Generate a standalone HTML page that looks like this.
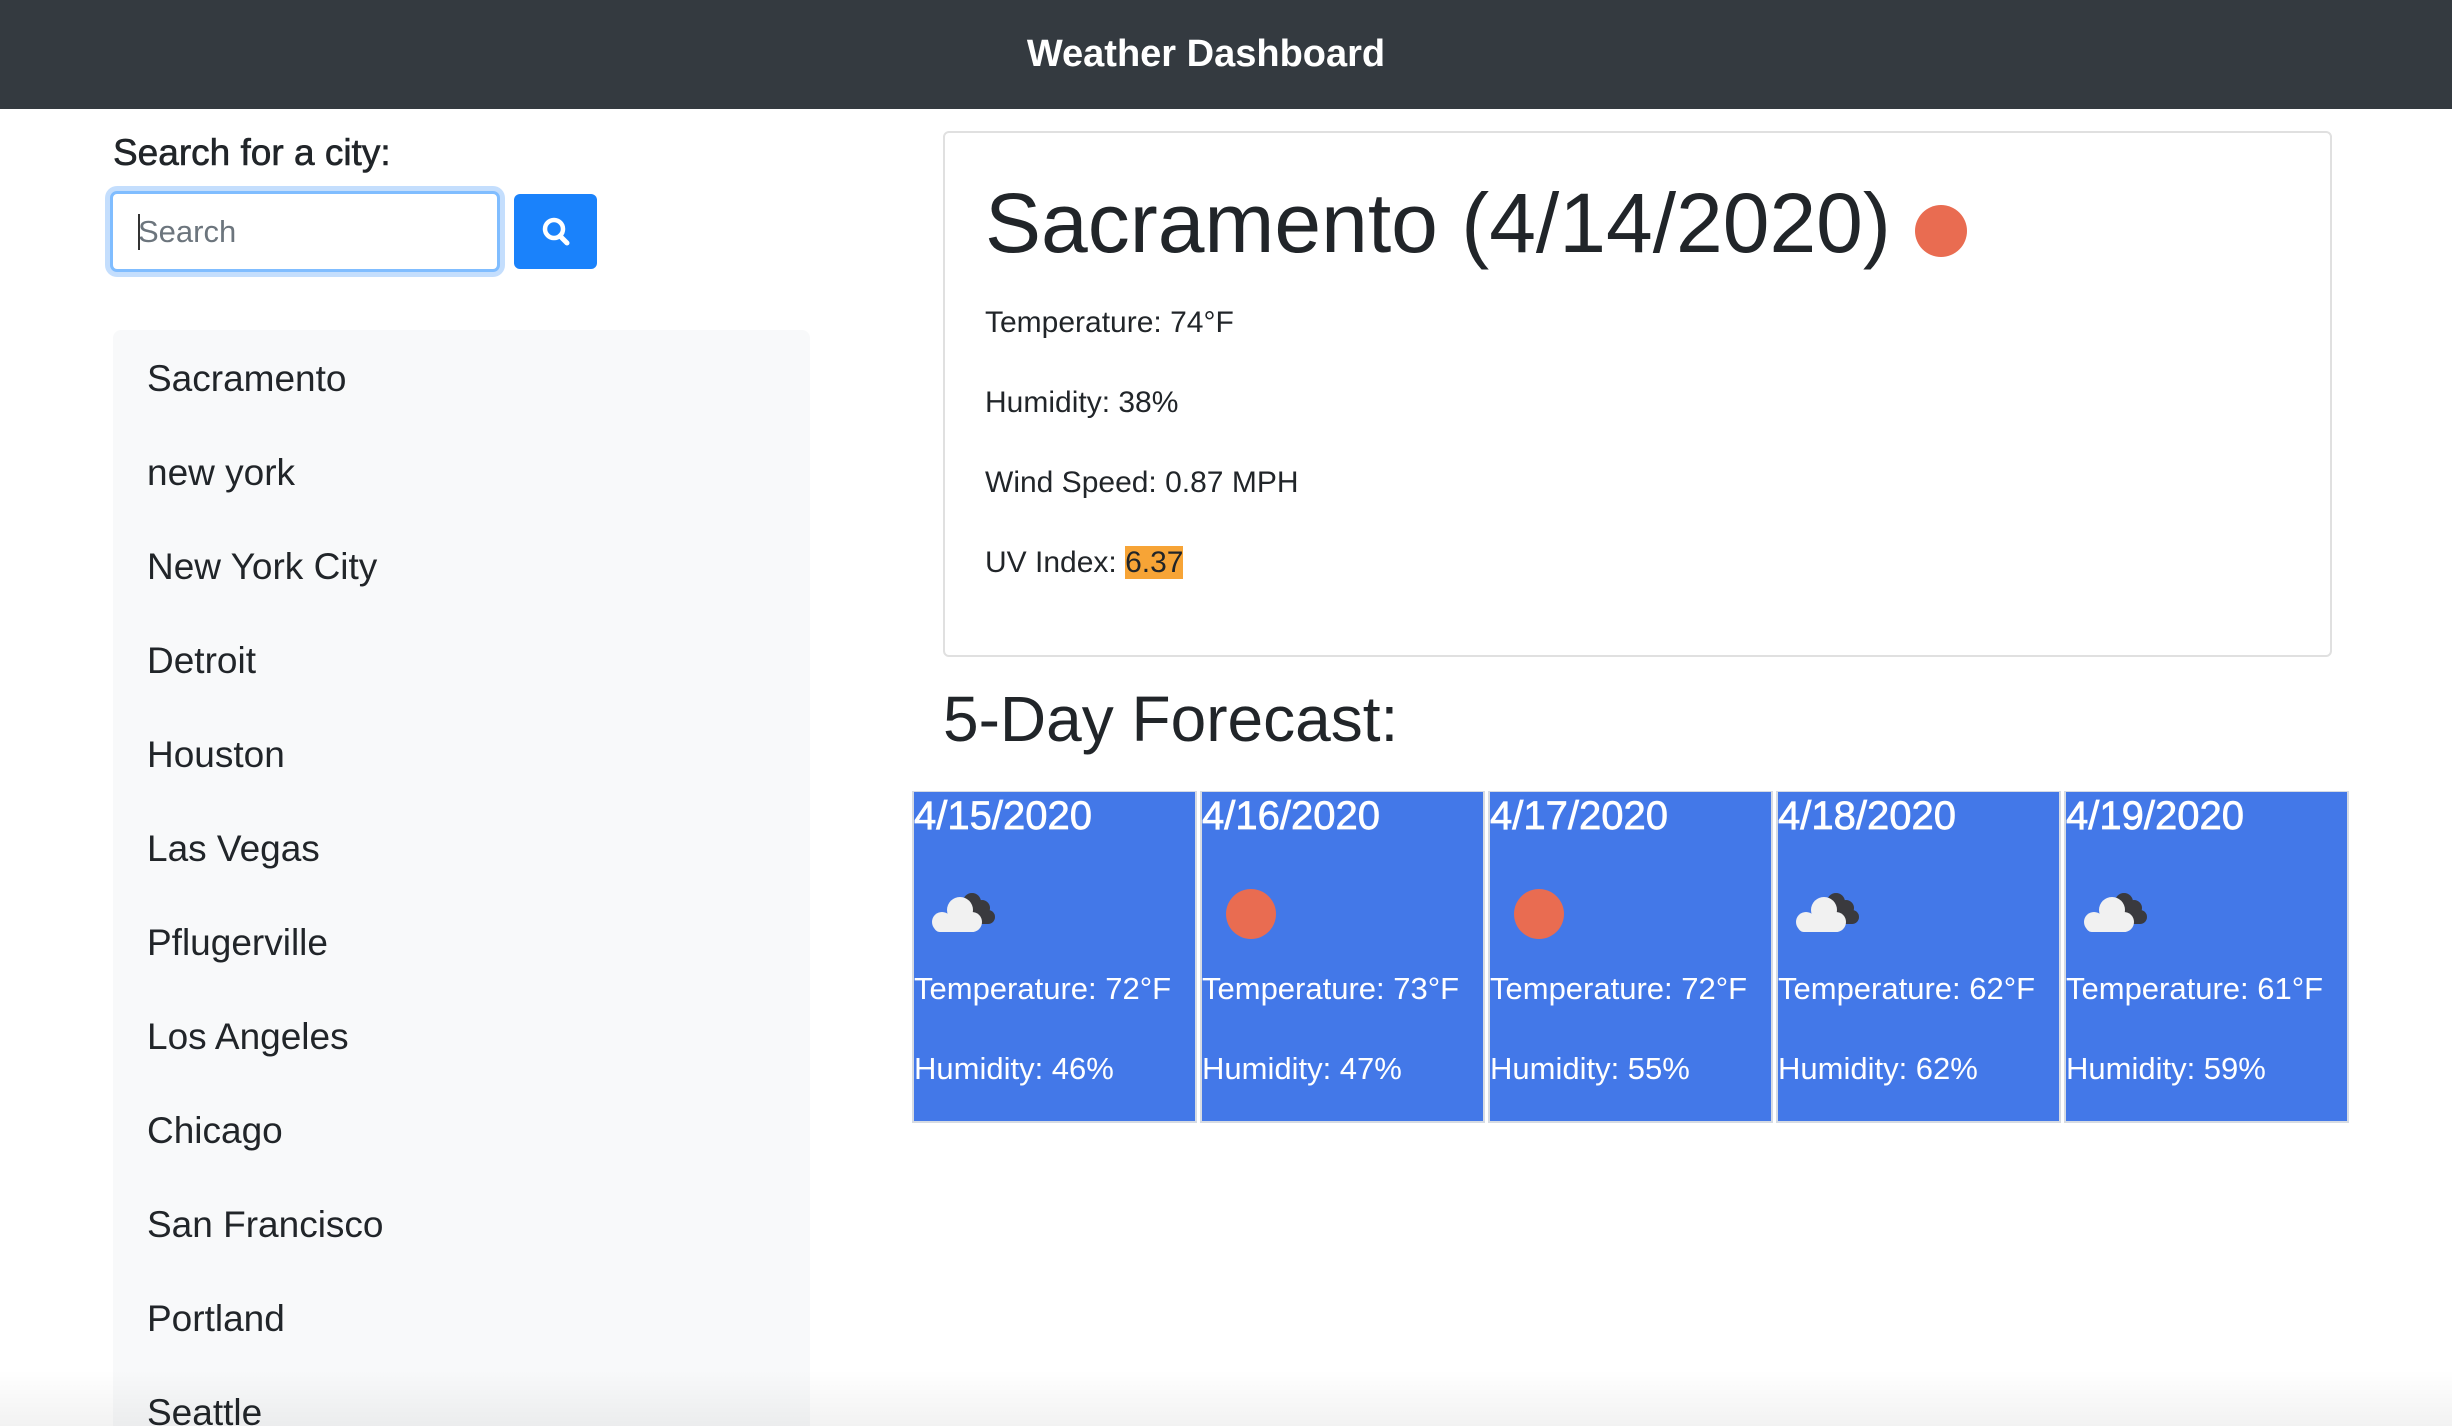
<!DOCTYPE html>
<html style="overflow:hidden;height:1426px"><head><meta charset="utf-8"><style>
*{box-sizing:border-box;margin:0;padding:0}
body{width:2452px;height:1426px;overflow:hidden;background:#fff;font-family:"Liberation Sans",Helvetica,Arial,sans-serif;color:#212529;position:relative}
.nav{position:absolute;left:0;top:0;width:2452px;height:109px;background:#343a40;color:#fff;font-size:38px;font-weight:bold;text-align:center;line-height:109px;padding-right:40px}
.lbl{position:absolute;left:113px;top:132px;font-size:37px;-webkit-text-stroke:0.6px #212529}
.inp{position:absolute;left:110px;top:191px;width:390px;height:81px;border:3px solid #80bdff;border-radius:7px;box-shadow:0 0 0 5px #c4defd;background:#fff;font-size:31px;color:#6c757d;padding-left:25px;line-height:75px}
.inp:before{content:"";position:absolute;left:25px;top:20px;width:2px;height:36px;background:#333}
.btn{position:absolute;left:514px;top:194px;width:83px;height:75px;background:#1a82fb;border-radius:6px}
.list{position:absolute;left:113px;top:330px;width:697px;height:1096px;background:#f8f9fa;border-radius:8px 8px 0 0}
.list div{position:absolute;left:34px;font-size:37px;line-height:40px}
.card{position:absolute;left:943px;top:131px;width:1389px;height:526px;border:2px solid #e0e0e0;border-radius:6px}
.card h1{position:absolute;left:40px;top:48px;font-size:84px;font-weight:500;line-height:1}
.dot{position:absolute;border-radius:50%;background:#e96c51}
.t{position:absolute;font-size:30px;line-height:34px}
.h5{position:absolute;left:943px;top:682px;font-size:64px;font-weight:500;line-height:74px}
.fc{position:absolute;top:791px;width:285px;height:332px;background:#4378e8;border:2px solid #d6dbe3;border-top-width:1px;color:#fff}
.fc .d{position:absolute;left:0;top:2px;font-size:40px;line-height:44px;-webkit-text-stroke:0.7px #fff}
.fc .a{position:absolute;left:0;top:180px;font-size:31px;line-height:34px}
.fc .b{position:absolute;left:0;top:260px;font-size:31px;line-height:34px}
.fade{position:absolute;left:0;top:1370px;width:2452px;height:56px;background:linear-gradient(rgba(0,0,0,0),rgba(0,0,0,0.05))}
</style></head><body>
<div class="nav">Weather Dashboard</div>
<div class="lbl">Search for a city:</div>
<div class="inp">Search</div>
<div class="btn"><svg width="83" height="75" viewBox="0 0 83 75"><circle cx="40" cy="35" r="9" fill="none" stroke="#fff" stroke-width="4.5"/><line x1="46" y1="42" x2="53" y2="49" stroke="#fff" stroke-width="5" stroke-linecap="round"/></svg></div>
<div class="list">
<div style="top:29px">Sacramento</div>
<div style="top:123px">new york</div>
<div style="top:217px">New York City</div>
<div style="top:311px">Detroit</div>
<div style="top:405px">Houston</div>
<div style="top:499px">Las Vegas</div>
<div style="top:593px">Pflugerville</div>
<div style="top:687px">Los Angeles</div>
<div style="top:781px">Chicago</div>
<div style="top:875px">San Francisco</div>
<div style="top:969px">Portland</div>
<div style="top:1063px">Seattle</div>
</div>
<div class="card">
<h1>Sacramento (4/14/2020)</h1>
<div class="dot" style="left:970px;top:72px;width:52px;height:52px"></div>
<div class="t" style="left:40px;top:173px">Temperature: 74°F</div>
<div class="t" style="left:40px;top:253px">Humidity: 38%</div>
<div class="t" style="left:40px;top:333px">Wind Speed: 0.87 MPH</div>
<div class="t" style="left:40px;top:413px">UV Index: <span style="background:#f7a436">6.37</span></div>
</div>
<div class="h5">5-Day Forecast:</div>

<div class="fc" style="left:912px"><div class="d">4/15/2020</div>
<svg style="position:absolute;left:14px;top:96px" width="76" height="50" viewBox="0 0 76 50"><g fill="#3a3a3e"><circle cx="44" cy="14" r="9"/><circle cx="54" cy="20" r="8"/><circle cx="60" cy="29" r="7"/><rect x="38" y="18" width="22" height="18"/></g><g fill="#f1f1f1"><circle cx="32" cy="22" r="13"/><circle cx="14" cy="34" r="10"/><circle cx="44" cy="34" r="10"/><rect x="6" y="30" width="44" height="14" rx="6"/></g></svg>
<div class="a">Temperature: 72°F</div><div class="b">Humidity: 46%</div></div>

<div class="fc" style="left:1200px"><div class="d">4/16/2020</div>
<div class="dot" style="left:24px;top:97px;width:50px;height:50px"></div>
<div class="a">Temperature: 73°F</div><div class="b">Humidity: 47%</div></div>

<div class="fc" style="left:1488px"><div class="d">4/17/2020</div>
<div class="dot" style="left:24px;top:97px;width:50px;height:50px"></div>
<div class="a">Temperature: 72°F</div><div class="b">Humidity: 55%</div></div>

<div class="fc" style="left:1776px"><div class="d">4/18/2020</div>
<svg style="position:absolute;left:14px;top:96px" width="76" height="50" viewBox="0 0 76 50"><g fill="#3a3a3e"><circle cx="44" cy="14" r="9"/><circle cx="54" cy="20" r="8"/><circle cx="60" cy="29" r="7"/><rect x="38" y="18" width="22" height="18"/></g><g fill="#f1f1f1"><circle cx="32" cy="22" r="13"/><circle cx="14" cy="34" r="10"/><circle cx="44" cy="34" r="10"/><rect x="6" y="30" width="44" height="14" rx="6"/></g></svg>
<div class="a">Temperature: 62°F</div><div class="b">Humidity: 62%</div></div>

<div class="fc" style="left:2064px"><div class="d">4/19/2020</div>
<svg style="position:absolute;left:14px;top:96px" width="76" height="50" viewBox="0 0 76 50"><g fill="#3a3a3e"><circle cx="44" cy="14" r="9"/><circle cx="54" cy="20" r="8"/><circle cx="60" cy="29" r="7"/><rect x="38" y="18" width="22" height="18"/></g><g fill="#f1f1f1"><circle cx="32" cy="22" r="13"/><circle cx="14" cy="34" r="10"/><circle cx="44" cy="34" r="10"/><rect x="6" y="30" width="44" height="14" rx="6"/></g></svg>
<div class="a">Temperature: 61°F</div><div class="b">Humidity: 59%</div></div>
<div class="fade"></div>
</body></html>
